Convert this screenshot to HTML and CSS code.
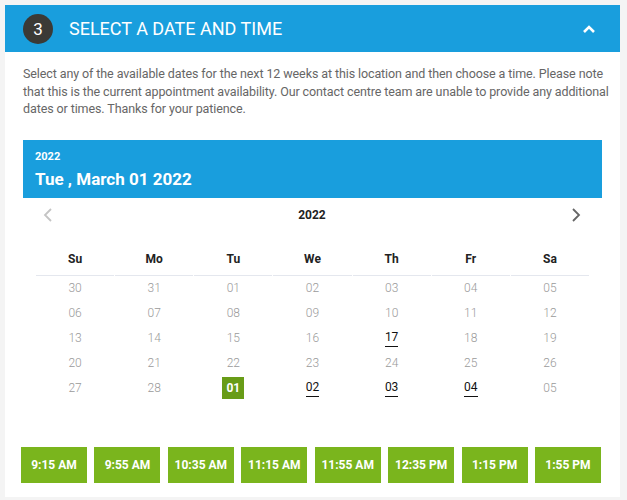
FILE: index.html
```html
<!DOCTYPE html>
<html lang="en">
<head>
  <meta charset="UTF-8" />
  <title>Select a date and time</title>
  <link rel="stylesheet" href="styles.css">
</head>
<body>

  <section class="step-panel">
    <div class="step-header">
      <span class="step-number">3</span>
      <h2>Select a date and time</h2>
      <svg class="collapse-icon" width="14" height="10" viewBox="0 0 14 10">
        <path d="M2 8 L7 3 L12 8" fill="none" stroke="#fff" stroke-width="2.6" />
      </svg>
    </div>

    <div class="step-body">
      <p class="intro">Select any of the available dates for the next 12 weeks at this location and then choose a time. Please note that this is the current appointment availability. Our contact centre team are unable to provide any additional dates or times. Thanks for your patience.</p>

      <div class="calendar">
        <div class="calendar-head">
          <div class="head-year">2022</div>
          <div class="head-date">Tue , March 01 2022</div>
        </div>

        <div class="calendar-nav">
          <svg width="10" height="14" viewBox="0 0 10 14">
            <path d="M8 1 L2 7 L8 13" fill="none" stroke="#c4c4c4" stroke-width="1.8" />
          </svg>
          <span>2022</span>
          <svg width="10" height="14" viewBox="0 0 10 14">
            <path d="M2 1 L8 7 L2 13" fill="none" stroke="#666" stroke-width="1.8" />
          </svg>
        </div>

        <table class="days">
          <thead>
            <tr>
              <th>Su</th><th>Mo</th><th>Tu</th><th>We</th><th>Th</th><th>Fr</th><th>Sa</th>
            </tr>
          </thead>
          <tbody>
            <tr>
              <td>30</td><td>31</td><td>01</td><td>02</td><td>03</td><td>04</td><td>05</td>
            </tr>
            <tr>
              <td>06</td><td>07</td><td>08</td><td>09</td><td>10</td><td>11</td><td>12</td>
            </tr>
            <tr>
              <td>13</td><td>14</td><td>15</td><td>16</td><td><span class="open">17</span></td><td>18</td><td>19</td>
            </tr>
            <tr>
              <td>20</td><td>21</td><td>22</td><td>23</td><td>24</td><td>25</td><td>26</td>
            </tr>
            <tr>
              <td>27</td><td>28</td><td><span class="chosen">01</span></td><td><span class="open">02</span></td><td><span class="open">03</span></td><td><span class="open">04</span></td><td>05</td>
            </tr>
          </tbody>
        </table>
      </div>

      <div class="times">
        <button>9:15 AM</button>
        <button>9:55 AM</button>
        <button>10:35 AM</button>
        <button>11:15 AM</button>
        <button>11:55 AM</button>
        <button>12:35 PM</button>
        <button>1:15 PM</button>
        <button>1:55 PM</button>
      </div>
    </div>
  </section>

</body>
</html>
```

FILE: styles.css
```css
body {
  margin: 0;
  background: #f4f4f4;
  font-family: Roboto, 'Liberation Sans', sans-serif;
  color: #333;
}

.step-panel {
  margin: 5px 7px 3px 5px;
  background: #fff;
}

/* STEP HEADER */
.step-header {
  display: flex;
  align-items: center;
  height: 47px;
  padding: 0 24px 0 18px;
  background: #199edd;
}
.step-number {
  width: 30px;
  height: 30px;
  border-radius: 50%;
  background: #3b3a36;
  color: #fff;
  font-size: 17px;
  line-height: 30px;
  text-align: center;
}
.step-header h2 {
  flex: 1;
  margin: 0 0 0 16px;
  color: #fff;
  font-size: 18px;
  font-weight: 400;
  text-transform: uppercase;
}

.step-body {
  padding: 13px 19px 14px 18px;
}
.intro {
  margin: 0 -12px 22px 0;
  font-size: 12.5px;
  line-height: 17.5px;
  letter-spacing: -0.1px;
  color: #666;
}

/* CALENDAR */
.calendar {
  width: 579px;
}
.calendar-head {
  height: 58px;
  padding: 0 12px;
  background: #199edd;
  color: #fff;
  font-weight: 700;
  box-sizing: border-box;
}
.head-year {
  padding-top: 10px;
  font-size: 11px;
  line-height: 13px;
}
.head-date {
  margin-top: 6px;
  font-size: 17px;
  line-height: 20px;
}
.calendar-nav {
  display: flex;
  justify-content: space-between;
  align-items: center;
  height: 34px;
  padding: 0 21px 0 20px;
}
.calendar-nav span {
  font-size: 12px;
  font-weight: 700;
  color: #222;
}

.days {
  width: 555px;
  margin: 12px 0 0 12px;
  border-collapse: separate;
  border-spacing: 1px 0;
  table-layout: fixed;
}
.days th {
  height: 29px;
  font-size: 12px;
  font-weight: 700;
  color: #222;
  border-bottom: 1px solid #e4e7ee;
}
.days td {
  height: 25px;
  padding: 0;
  text-align: center;
  font-size: 12px;
  font-weight: 300;
  color: #9a9a9a;
}
.days .open {
  display: inline-block;
  padding-bottom: 2px;
  border-bottom: 1px solid #111;
  color: #111;
  font-weight: 400;
  line-height: 14px;
}
.days .chosen {
  display: inline-block;
  width: 22px;
  height: 22px;
  line-height: 22px;
  background: #689c17;
  color: #fff;
  font-weight: 700;
}

/* TIME SLOTS */
.times {
  display: flex;
  justify-content: space-between;
  margin: 46px 0 0 -2px;
}
.times button {
  width: 66px;
  height: 36px;
  padding: 0;
  border: none;
  background: #7ab51d;
  color: #fff;
  font-family: Roboto, 'Liberation Sans', sans-serif;
  font-size: 12px;
  font-weight: 700;
  cursor: pointer;
}
```
